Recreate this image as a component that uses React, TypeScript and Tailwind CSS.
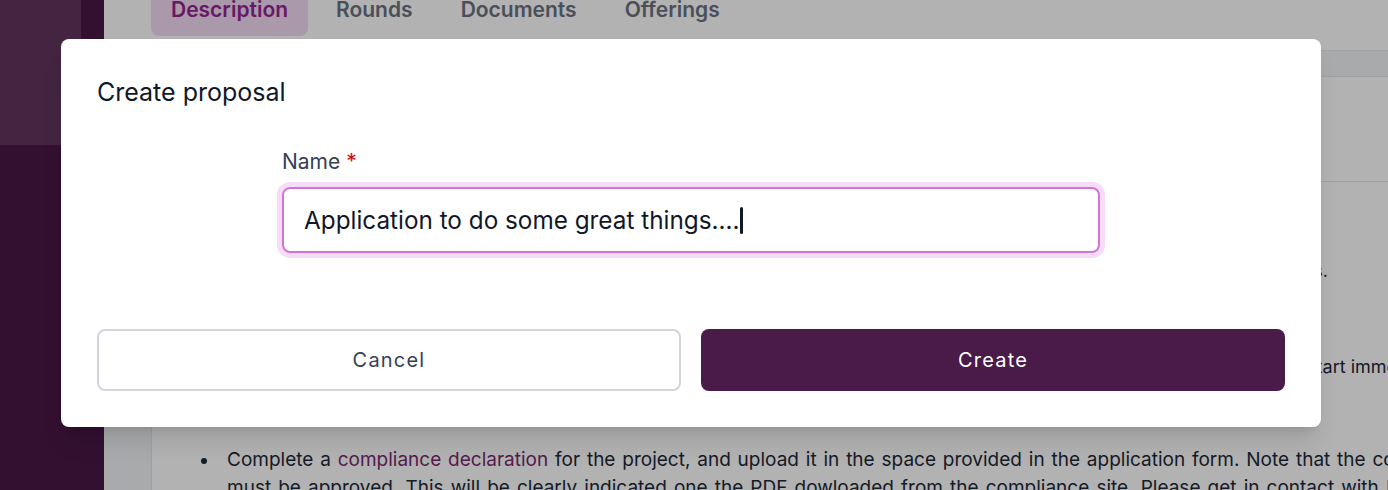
import React from "react";

const tabs = ["Description", "Rounds", "Documents", "Offerings"];

const Background = () => {
  return (
    <div className="flex h-full w-full">
      {/* sidebar */}
      <aside className="w-[104px] shrink-0 bg-[#491846]">
        <div className="h-[145px] w-[81px] bg-[#60365d]" />
      </aside>

      {/* main page, scrolled a bit */}
      <main className="-mt-[16px] min-w-0 flex-1 bg-white">
        <div className="flex gap-[8px] border-b border-gray-200 pb-[14px] pl-[47px]">
          {tabs.map((t, i) => (
            <div
              key={t}
              className={
                i === 0
                  ? "rounded-lg bg-[#f4dcf4] px-5 py-3 text-[21px] leading-7 font-semibold text-[#962592]"
                  : "rounded-lg px-5 py-3 text-[21px] leading-7 font-semibold text-gray-500"
              }
            >
              {t}
            </div>
          ))}
        </div>
        <div className="h-[26px] border-b border-gray-200 bg-gray-100" />

        <div className="flex">
          <div className="w-[48px] shrink-0 border-r border-gray-200 bg-gray-100" />
          <div className="min-w-0 flex-1 pb-10 text-lg leading-7 text-gray-800">
            <div className="h-[105px] border-b border-gray-200" />
            <div className="pl-[49px]">
              <p className="mr-[60px] mt-[75px] whitespace-nowrap text-right">
                Applications are reviewed on a rolling basis and applicants are notified within four weeks.
              </p>
              <p className="mt-[68px] whitespace-nowrap">
                Once the proposal has been approved by the committee and the agreement has been signed by both parties, the project can then start immediately after signing.
              </p>
              <ul className="mt-[65px] w-[1382px] text-[19px]">
                <li className="flex gap-5">
                  <span className="mt-[12px] h-[6px] w-[6px] shrink-0 rounded-full bg-gray-800" />
                  <span className="text-justify">
                    Complete a <span className="text-[#7a2a70]">compliance declaration</span> for the project, and upload it in the space provided in the application form. Note that the compliance declaration must be approved. This will be clearly indicated one the PDF dowloaded from the compliance site. Please get in contact with <span className="text-[#7a2a70]">DPO</span> for more details. Applications without a valid declaration will not be considered for funding.
                  </span>
                </li>
              </ul>
            </div>
          </div>
        </div>
      </main>
    </div>
  );
};

const CreateProposalModal = () => {
  return (
    <div className="absolute inset-0 bg-black/30 pl-[61px] pt-[39px]">
      <div className="w-[1260px] rounded-lg bg-white px-9 pb-9 pt-[37px] shadow-xl">
        <h2 className="text-[25px] leading-8 text-gray-900">Create proposal</h2>

        <div className="mx-auto mt-10 w-full max-w-[818px]">
          <label className="mb-[11px] block text-[21px] leading-7 text-gray-700">
            Name <span className="text-red-600">*</span>
          </label>
          {/* focused input */}
          <div className="flex h-[66px] items-center rounded-lg border-2 border-[#d273d6] px-5 ring-[5px] ring-[#f6dcf6]">
            <span className="text-[24.3px] text-gray-900">Application to do some great things....</span>
            <span className="ml-[1px] mt-[1px] h-[27px] w-[3px] rounded-sm bg-gray-900" />
          </div>
        </div>

        <div className="mt-[76px] grid grid-cols-2 gap-5">
          <button className="h-[62px] rounded-lg border-2 border-gray-300 bg-white text-xl tracking-[0.06em] text-gray-700">
            Cancel
          </button>
          <button className="h-[62px] rounded-lg bg-[#4a1a48] text-xl tracking-[0.06em] text-white">
            Create
          </button>
        </div>
      </div>
    </div>
  );
};

export default function App() {
  return (
    <div className="relative h-[490px] w-full overflow-hidden font-['Inter',sans-serif]">
      <Background />
      <CreateProposalModal />
    </div>
  );
}
